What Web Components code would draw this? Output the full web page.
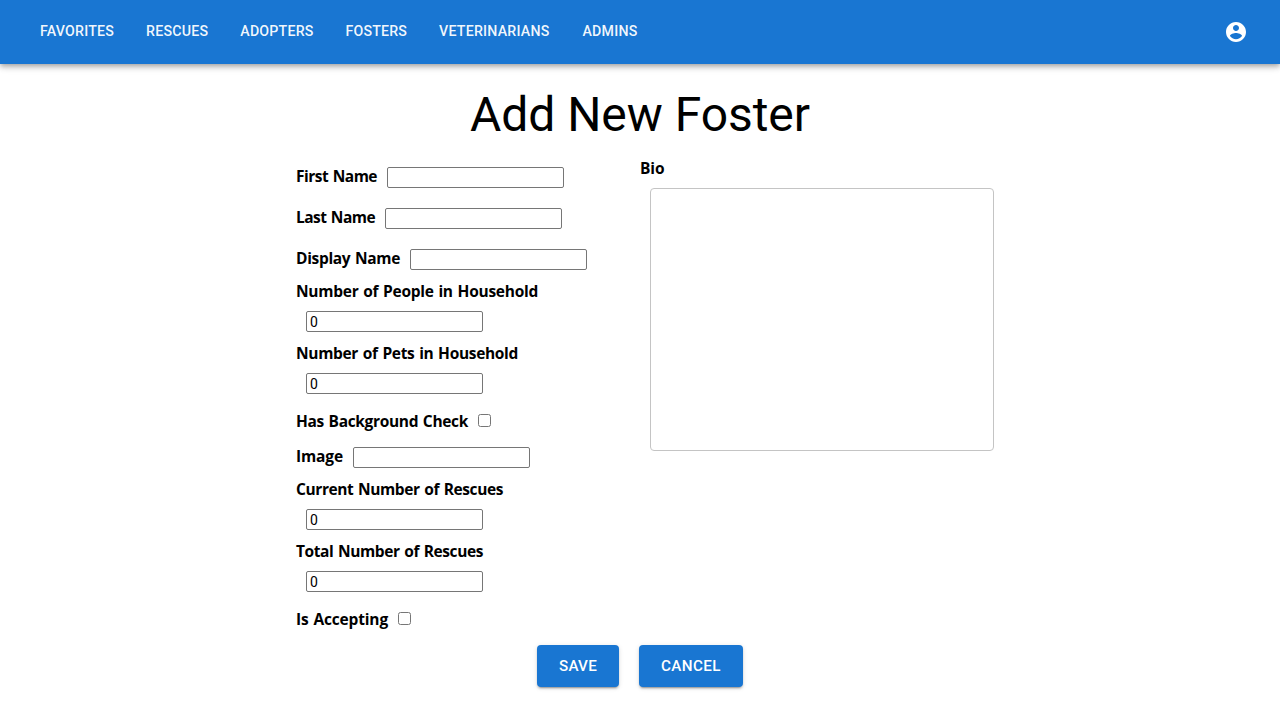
<!DOCTYPE html>
<html lang="en">
<head>
<meta charset="utf-8">
<title>Add New Foster</title>
<style>
html, body { margin: 0; background: #fff; color: #000; }
body { font-family: Roboto, "Liberation Sans", sans-serif; height: 720px; overflow: hidden; }
</style>
</head>
<body>
<foster-page></foster-page>
<script>
// Text with a fixed measure: tracking is adjusted so the text fills its width.
class FitText extends HTMLElement {
  constructor() {
    super();
    this.attachShadow({ mode: 'open' }).innerHTML = `
      <style>:host { display: block; white-space: nowrap; } span { display: inline-block; }</style>
      <span><slot></slot></span>`;
  }
  connectedCallback() {
    const width = parseFloat(this.getAttribute('width'));
    this.style.width = width + 'px';
    const span = this.shadowRoot.querySelector('span');
    const natural = span.getBoundingClientRect().width;
    span.style.letterSpacing = (width - natural) / this.textContent.length + 'px';
  }
}

class NavBar extends HTMLElement {
  constructor() {
    super();
    this.attachShadow({ mode: 'open' }).innerHTML = `
      <style>
        :host { display: flex; justify-content: space-between; align-items: center; height: 64px; box-sizing: border-box;
          padding: 0 32px 0 40px; background: #1976d2; color: #fff;
          box-shadow: 0 2px 4px -1px rgba(0,0,0,.2), 0 4px 5px 0 rgba(0,0,0,.14), 0 1px 10px 0 rgba(0,0,0,.12); }
        nav { display: flex; gap: 32px; font: 500 14.2px/24px Roboto, sans-serif; color: rgba(255,255,255,.95); padding-bottom: 2px; }
        fit-text:last-child { margin-left: 1px; }
        svg { width: 24px; height: 24px; fill: currentColor; display: block; }
      </style>
      <nav>
        <fit-text width="74">FAVORITES</fit-text>
        <fit-text width="62.3">RESCUES</fit-text>
        <fit-text width="73.3">ADOPTERS</fit-text>
        <fit-text width="61.5">FOSTERS</fit-text>
        <fit-text width="110.4">VETERINARIANS</fit-text>
        <fit-text width="55">ADMINS</fit-text>
      </nav>
      <svg viewBox="0 0 24 24"><path d="M12 2C6.48 2 2 6.48 2 12s4.48 10 10 10 10-4.48 10-10S17.52 2 12 2zm0 3c1.66 0 3 1.34 3 3s-1.34 3-3 3-3-1.34-3-3 1.34-3 3-3zm0 14.2c-2.5 0-4.71-1.28-6-3.22.03-1.99 4-3.08 6-3.08 1.99 0 5.97 1.09 6 3.08-1.29 1.94-3.5 3.22-6 3.22z"/></svg>`;
  }
}

class FormField extends HTMLElement {
  constructor() { super(); this.attachShadow({ mode: 'open' }); }
  connectedCallback() {
    const check = this.hasAttribute('check');
    const value = this.getAttribute('value') || '';
    this.shadowRoot.innerHTML = `
      <style>
        :host { display: flex; align-items: flex-start; }
        :host([stacked]) { flex-direction: column; }
        fit-text { font: 700 15.5px/23px "Open Sans", "Noto Sans", sans-serif; word-spacing: 1px; height: 21px; padding-top: 8px; }
        :host([check]) fit-text { padding-top: 6px; }
        :host([stacked]) fit-text { padding-top: 0; }
        input { display: block; margin: 10px; box-sizing: border-box; }
        :host([check]) { height: 33px; }
        input[type=text] { width: 177px; height: 21px; padding: 1px 2px 1px 3px; border: 1px solid #767676; border-radius: 2px;
          font: 14px Roboto, sans-serif; color: #000; background: #fff; outline: none; }
        input[type=checkbox] { width: 13px; height: 13px; }
      </style>
      <fit-text width="${this.getAttribute('width')}">${this.getAttribute('label')}</fit-text>
      <input type="${check ? 'checkbox' : 'text'}" ${check ? '' : `value="${value}"`}>`;
  }
}

class BioField extends HTMLElement {
  constructor() {
    super();
    this.attachShadow({ mode: 'open' }).innerHTML = `
      <style>
        :host { display: block; }
        fit-text { font: 700 15.5px/23px "Open Sans", "Noto Sans", sans-serif; height: 21px; }
        textarea { display: block; box-sizing: border-box; width: 344px; height: 263px; margin: 10px; padding: 16px 14px;
          border: 1px solid #c4c4c4; border-radius: 4px; resize: none; outline: none; background: #fff; }
      </style>
      <fit-text width="24.5">Bio</fit-text>
      <textarea></textarea>`;
  }
}

class ActionButton extends HTMLElement {
  constructor() {
    super();
    this.attachShadow({ mode: 'open' }).innerHTML = `
      <style>
        :host { display: block; }
        button { display: block; height: 42px; padding: 0 22px; border: 0; border-radius: 4px; background: #1976d2; color: #fff;
          font: 500 15.2px/26px Roboto, sans-serif;
          box-shadow: 0 3px 1px -2px rgba(0,0,0,.2), 0 2px 2px 0 rgba(0,0,0,.14), 0 1px 5px 0 rgba(0,0,0,.12); }
      </style>
      <button><slot></slot></button>`;
  }
}

class FosterPage extends HTMLElement {
  constructor() {
    super();
    this.attachShadow({ mode: 'open' }).innerHTML = `
      <style>
        :host { display: block; }
        h1 { margin: 23px 0 0; height: 70px; display: flex; justify-content: center; font: 400 48px/56px Roboto, sans-serif; }
        main { display: grid; grid-template-columns: 344px 364px; padding-left: 296px; height: 478px; }
        footer { display: flex; justify-content: center; gap: 20px; padding-top: 10px; }
      </style>
      <nav-bar></nav-bar>
      <h1><fit-text width="340">Add New Foster</fit-text></h1>
      <main>
        <section>
          <form-field label="First Name" width="81"></form-field>
          <form-field label="Last Name" width="79"></form-field>
          <form-field label="Display Name" width="104"></form-field>
          <form-field stacked label="Number of People in Household" width="242" value="0"></form-field>
          <form-field stacked label="Number of Pets in Household" width="222" value="0"></form-field>
          <form-field check label="Has Background Check" width="172"></form-field>
          <form-field label="Image" width="47"></form-field>
          <form-field stacked label="Current Number of Rescues" width="207" value="0"></form-field>
          <form-field stacked label="Total Number of Rescues" width="187" value="0"></form-field>
          <form-field check label="Is Accepting" width="92"></form-field>
        </section>
        <bio-field></bio-field>
      </main>
      <footer>
        <action-button><fit-text width="38">SAVE</fit-text></action-button>
        <action-button><fit-text width="60">CANCEL</fit-text></action-button>
      </footer>`;
  }
}

customElements.define('fit-text', FitText);
customElements.define('nav-bar', NavBar);
customElements.define('form-field', FormField);
customElements.define('bio-field', BioField);
customElements.define('action-button', ActionButton);
customElements.define('foster-page', FosterPage);
</script>
</body>
</html>
